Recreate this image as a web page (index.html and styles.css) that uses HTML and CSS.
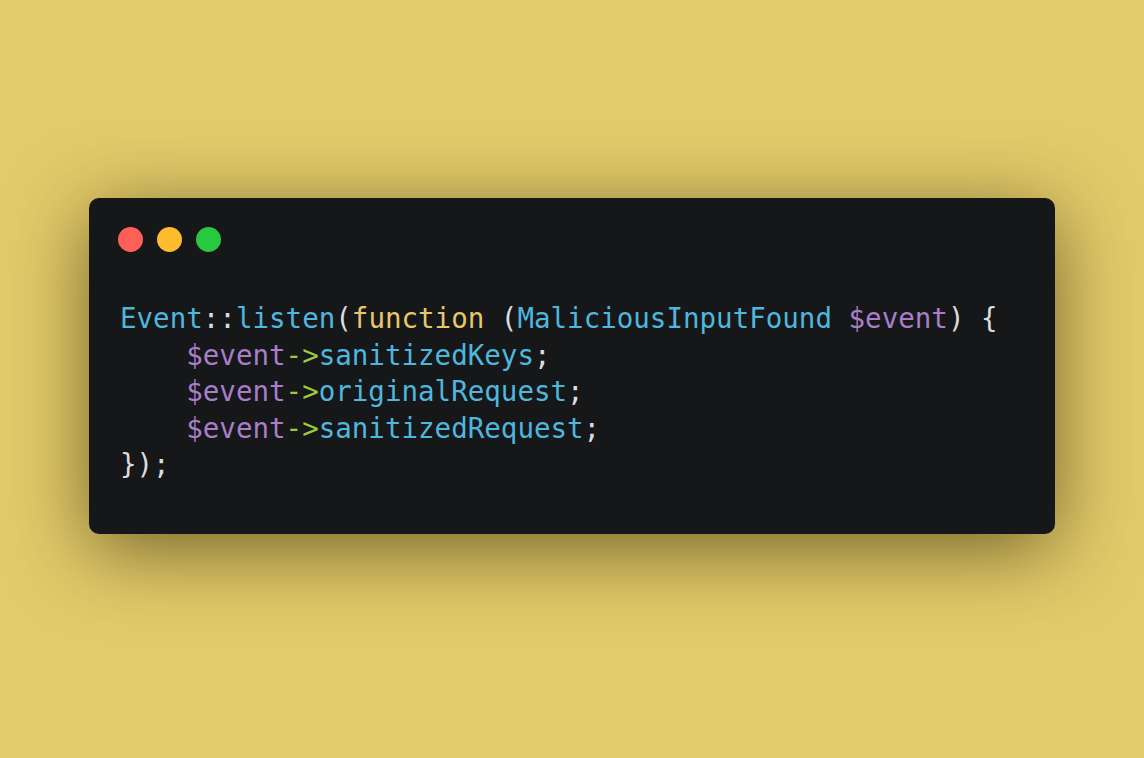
FILE: index.html
```html
<!DOCTYPE html>
<html>
<head>
<meta charset="utf-8">
<link rel="stylesheet" href="styles.css">
</head>
<body>
<div class="stage">
  <div class="window">
    <div class="controls">
      <span class="dot red"></span>
      <span class="dot yellow"></span>
      <span class="dot green"></span>
    </div>
<pre class="code"><span class="c">Event</span><span class="w">::</span><span class="c">listen</span><span class="w">(</span><span class="k">function</span> <span class="w">(</span><span class="c">MaliciousInputFound</span> <span class="v">$event</span><span class="w">) {</span>
    <span class="v">$event</span><span class="o">-&gt;</span><span class="c">sanitizedKeys</span><span class="w">;</span>
    <span class="v">$event</span><span class="o">-&gt;</span><span class="c">originalRequest</span><span class="w">;</span>
    <span class="v">$event</span><span class="o">-&gt;</span><span class="c">sanitizedRequest</span><span class="w">;</span>
<span class="w">});</span></pre>
  </div>
</div>
</body>
</html>
```
FILE: styles.css
```css
html, body {
  margin: 0;
  padding: 0;
  width: 1144px;
  height: 758px;
  background: #e3cb6a;
  overflow: hidden;
}
.stage {
  display: flex;
  justify-content: center;
  padding-top: 198px;
}
.window {
  width: 966px;
  height: 336px;
  box-sizing: border-box;
  background: #161719;
  border-radius: 10px;
  box-shadow: 0 16px 80px rgba(40, 30, 0, 0.6);
  padding: 29px 31px 0 29px;
}
.controls {
  display: flex;
  gap: 14px;
}
.dot {
  width: 25px;
  height: 25px;
  border-radius: 50%;
  display: block;
}
.red { background: #ff5f57; }
.yellow { background: #febc2e; }
.green { background: #28c840; }
.code {
  margin: 48px 0 0 2px;
  font-family: "DejaVu Sans Mono", monospace;
  font-size: 27.5px;
  line-height: 36.5px;
  color: #dddddd;
}
.c { color: #4fb6de; }
.w { color: #dcdcdc; }
.k { color: #e6c76a; }
.v { color: #a87ecb; }
.o { color: #9dcb3e; }
```
